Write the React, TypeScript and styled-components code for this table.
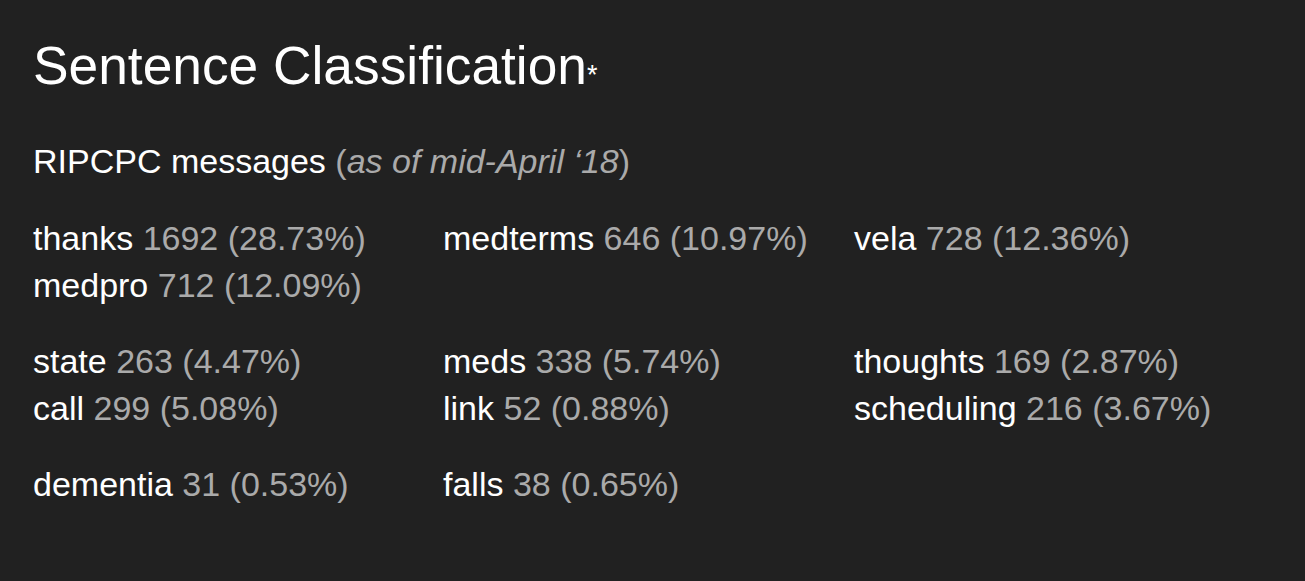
import React from "react";
import styled, { createGlobalStyle } from "styled-components";

const Global = createGlobalStyle`
  html, body {
    margin: 0;
    padding: 0;
    background: #212121;
  }
  body {
    font-family: "Liberation Sans", Arial, sans-serif;
    color: #ffffff;
  }
`;

const Page = styled.main`
  min-height: 581px;
  box-sizing: border-box;
  padding: 34px 33px 0 33px;
`;

const Title = styled.h1`
  margin: 0;
  font-size: 53.3px;
  line-height: 64px;
  font-weight: 400;
  color: #ffffff;
`;

const Star = styled.span`
  font-size: 27px;
`;

const Subtitle = styled.h2`
  margin: 31px 0 0 0;
  font-size: 34px;
  line-height: 47px;
  font-weight: 400;
  color: #ffffff;
`;

const Muted = styled.span`
  color: #aaaaaa;
`;

const Em = styled.em`
  font-style: italic;
`;

const Groups = styled.div`
  margin-top: 30px;
  display: flex;
  flex-direction: column;
  gap: 29px;
`;

const Group = styled.div`
  display: grid;
  grid-template-columns: 410px 411px 410px;
`;

const Item = styled.div`
  font-size: 34px;
  line-height: 47px;
  white-space: nowrap;
  color: #ffffff;
`;

type Entry = { label: string; count: number; pct: string };

const groups: Entry[][] = [
  [
    { label: "thanks", count: 1692, pct: "28.73%" },
    { label: "medterms", count: 646, pct: "10.97%" },
    { label: "vela", count: 728, pct: "12.36%" },
    { label: "medpro", count: 712, pct: "12.09%" },
  ],
  [
    { label: "state", count: 263, pct: "4.47%" },
    { label: "meds", count: 338, pct: "5.74%" },
    { label: "thoughts", count: 169, pct: "2.87%" },
    { label: "call", count: 299, pct: "5.08%" },
    { label: "link", count: 52, pct: "0.88%" },
    { label: "scheduling", count: 216, pct: "3.67%" },
  ],
  [
    { label: "dementia", count: 31, pct: "0.53%" },
    { label: "falls", count: 38, pct: "0.65%" },
  ],
];

export default function App() {
  return (
    <>
      <Global />
      <Page>
        <Title>
          Sentence Classification<Star>*</Star>
        </Title>
        <Subtitle>
          RIPCPC messages{" "}
          <Muted>
            (<Em>as of mid-April ‘18</Em>)
          </Muted>
        </Subtitle>
        <Groups>
          {groups.map((g, gi) => (
            <Group key={gi}>
              {g.map((e) => (
                <Item key={e.label}>
                  {e.label}{" "}
                  <Muted>
                    {e.count} ({e.pct})
                  </Muted>
                </Item>
              ))}
            </Group>
          ))}
        </Groups>
      </Page>
    </>
  );
}
